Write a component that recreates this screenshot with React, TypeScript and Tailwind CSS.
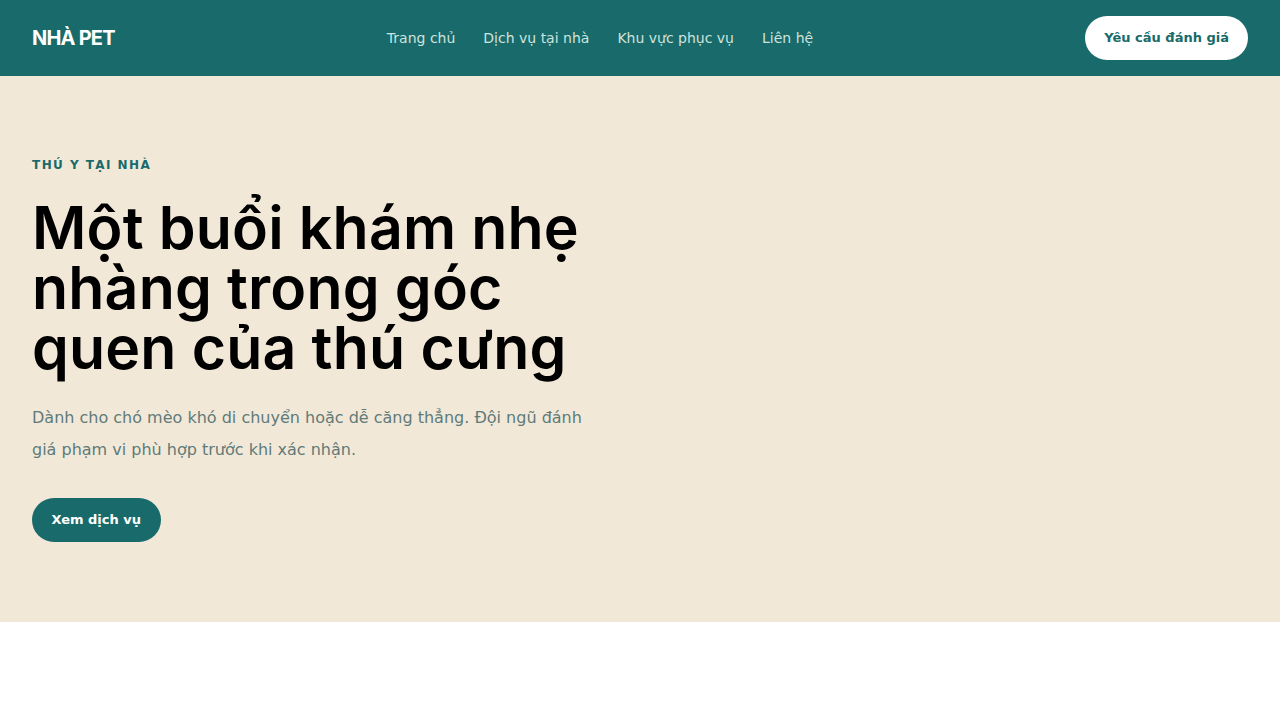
const navLinks = ["Trang chủ", "Dịch vụ tại nhà", "Khu vực phục vụ", "Liên hệ"];

const Header = () => {
  return (
    <header className="h-[76px] bg-[#186b6a] px-8 flex items-center justify-between">
      <div className="font-['Inter',sans-serif] font-bold text-[20px] text-white tracking-[-0.04em]">
        NHÀ PET
      </div>
      <nav className="flex items-center gap-7 font-['DejaVu_Sans',sans-serif] text-[14px] text-[#cfe2de]">
        {navLinks.map((link) => (
          <a key={link} href="#" className="hover:text-white">
            {link}
          </a>
        ))}
      </nav>
      <button className="h-11 px-[19px] rounded-full bg-white text-[#186b6a] font-['DejaVu_Sans',sans-serif] font-bold text-[13px]">
        Yêu cầu đánh giá
      </button>
    </header>
  );
};

const Hero = () => {
  return (
    <section className="bg-[#f2e8d8] px-8 pt-20 pb-20">
      <div className="max-w-[590px]">
        <div className="font-['DejaVu_Sans',sans-serif] font-bold text-[12px] leading-[18px] tracking-[0.12em] text-[#186b6a]">
          THÚ Y TẠI NHÀ
        </div>
        <h1 className="mt-6 font-['Inter',sans-serif] font-semibold text-[59px] leading-[60px] tracking-[0.003em] text-black">
          Một buổi khám nhẹ nhàng trong góc quen của thú cưng
        </h1>
        <p className="mt-6 max-w-[556px] font-['DejaVu_Sans',sans-serif] text-[16px] leading-[32px] text-[#5f7b79]">
          Dành cho chó mèo khó di chuyển hoặc dễ căng thẳng. Đội ngũ đánh giá
          phạm vi phù hợp trước khi xác nhận.
        </p>
        <button className="mt-8 h-11 px-[19.5px] rounded-full bg-[#186b6a] text-white font-['DejaVu_Sans',sans-serif] font-bold text-[13px]">
          Xem dịch vụ
        </button>
      </div>
    </section>
  );
};

export default function App() {
  return (
    <div className="min-h-screen bg-white">
      <Header />
      <Hero />
    </div>
  );
}
